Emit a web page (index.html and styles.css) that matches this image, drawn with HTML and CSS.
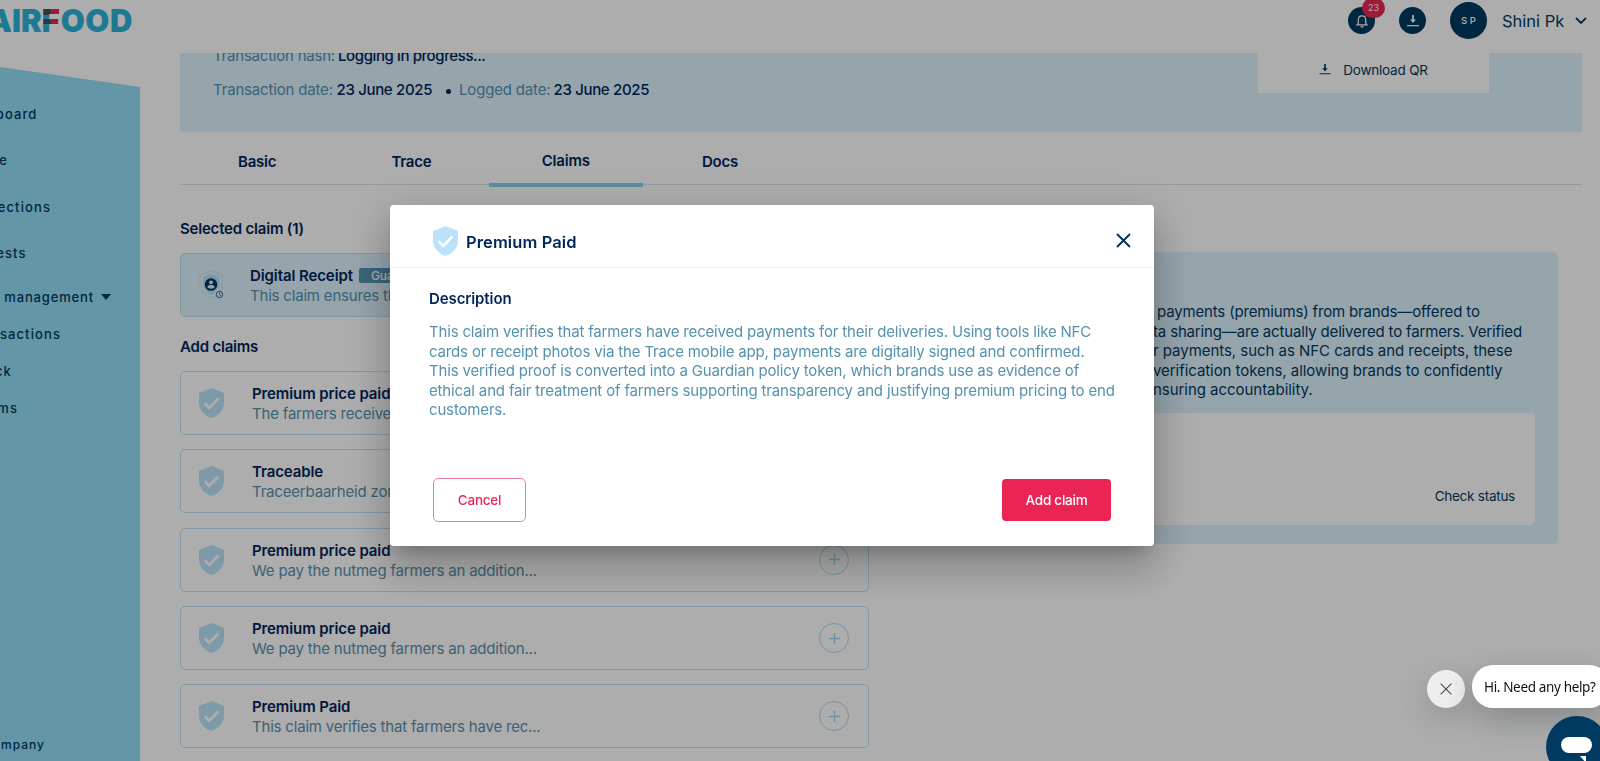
FILE: index.html
```html
<!DOCTYPE html>
<html lang="en">
<head>
<meta charset="utf-8">
<title>Fairfood Trace</title>
<link rel="stylesheet" href="styles.css">
</head>
<body>
<svg class="defs" width="0" height="0">
  <symbol id="shield" viewBox="0 0 25 30"><path fill="currentColor" d="M12.500 0 25 5v9.500c0 7-4.800 13-12.500 15.500C4.800 27.500 0 21.500 0 14.500V5z"/><path d="m5.700 15.300 4.500 4.500 9.300-9.300" fill="none" stroke="#fff" stroke-width="2.700"/></symbol>
  <symbol id="download" viewBox="0 0 12 12"><path d="M6 0v6" stroke="currentColor" stroke-width="1.800"/><path d="M3 4.500h6L6 8z" fill="currentColor"/><path d="M0 10.700h12" stroke="currentColor" stroke-width="1.200"/></symbol>
  <symbol id="plus" viewBox="0 0 11 11"><path d="M5.500 0v11M0 5.500h11" stroke="currentColor" stroke-width="1.400"/></symbol>
</svg>

<div class="app">
  <header class="topbar">
    <div class="logo"><span class="logo-air">AIR</span><span class="logo-f">F</span><span class="logo-ood">OOD</span></div>
    <div class="tools">
      <div class="tool"><svg width="12" height="14" viewBox="0 0 12 14" fill="none" stroke="#fff" stroke-width="1.200"><path d="M1 10.800h10L9.700 9V5.500C9.700 3.200 8.200 1.800 6 1.800S2.300 3.200 2.300 5.500V9z"/><path d="M4.500 12.800h3"/></svg><span class="count">23</span></div>
      <div class="tool"><svg class="dl" width="12" height="12"><use href="#download"/></svg></div>
      <div class="avatar">S P</div>
      <div class="user">Shini Pk</div>
      <svg class="chev" width="12" height="8" viewBox="0 0 12 8"><path d="m1 1 5 5 5-5" fill="none" stroke="#003a60" stroke-width="1.800"/></svg>
    </div>
  </header>

  <div class="body">
    <nav class="side">
      <div class="side-item w-board">board</div>
      <div class="side-item w-e">e</div>
      <div class="side-item w-ections">ections</div>
      <div class="side-item w-ests">ests</div>
      <div class="side-item short w-mgmt">management<i class="caret"></i></div>
      <div class="side-item short w-sactions">sactions</div>
      <div class="side-item short w-ck">ck</div>
      <div class="side-item short w-ms">ms</div>
      <div class="company">ompany</div>
    </nav>

    <main class="main">
      <section class="info">
        <div class="info-lines">
          <div class="info-row"><span class="lbl hash">Transaction hash:</span> <b class="val progress">Logging in progress...</b></div>
          <div class="info-row"><span class="lbl">Transaction date:</span> <b class="val">23 June 2025</b><i class="dot"></i><span class="lbl logged">Logged date:</span> <b class="val">23 June 2025</b></div>
        </div>
        <div class="qr"><svg width="12" height="11"><use href="#download"/></svg><span>Download QR</span></div>
      </section>

      <div class="tabs">
        <div class="tab">Basic</div><div class="tab">Trace</div><div class="tab active">Claims</div><div class="tab">Docs</div>
      </div>

      <div class="cols">
        <section class="claims">
          <h2 class="h selected-h">Selected claim (1)</h2>
          <article class="card chosen">
            <svg class="ico-digital" width="26" height="30" viewBox="0 0 26 30"><path d="M12 1 23 5v9c0 6-4 11-11 14C5 25 1 20 1 14V5z" fill="none" stroke="#c3e5f7"/><path d="M12 4 20 7v7c0 5-3 8-8 11-5-3-8-6-8-11V7z" fill="#bae1f6"/><circle cx="12" cy="14.500" r="6.300" fill="#003a60"/><circle cx="12" cy="12.300" r="1.900" fill="#def2fe"/><path d="M8.300 17c.8-2.600 6.600-2.600 7.400 0-1.500 2.300-5.900 2.300-7.400 0z" fill="#def2fe"/><circle cx="20.500" cy="24.500" r="3.200" fill="#def2fe" stroke="#33618a"/><path d="M20.500 22.500v2.200l1.500 1" fill="none" stroke="#33618a" stroke-width=".9"/></svg>
            <div class="txt"><div class="title">Digital Receipt <span class="tag">Guardian</span></div><div class="desc">This claim ensures th</div></div>
          </article>
          <h2 class="h">Add claims</h2>
          <div class="list">
            <article class="card"><svg class="shield"><use href="#shield"/></svg><div class="txt"><div class="title">Premium price paid</div><div class="desc">The farmers receive</div></div><div class="add"><svg width="11" height="11"><use href="#plus"/></svg></div></article>
            <article class="card"><svg class="shield"><use href="#shield"/></svg><div class="txt"><div class="title">Traceable</div><div class="desc">Traceerbaarheid zor</div></div><div class="add"><svg width="11" height="11"><use href="#plus"/></svg></div></article>
            <article class="card"><svg class="shield"><use href="#shield"/></svg><div class="txt"><div class="title">Premium price paid</div><div class="desc">We pay the nutmeg farmers an addition...</div></div><div class="add"><svg width="11" height="11"><use href="#plus"/></svg></div></article>
            <article class="card"><svg class="shield"><use href="#shield"/></svg><div class="txt"><div class="title">Premium price paid</div><div class="desc">We pay the nutmeg farmers an addition...</div></div><div class="add"><svg width="11" height="11"><use href="#plus"/></svg></div></article>
            <article class="card"><svg class="shield"><use href="#shield"/></svg><div class="txt"><div class="title">Premium Paid</div><div class="desc">This claim verifies that farmers have rec...</div></div><div class="add"><svg width="11" height="11"><use href="#plus"/></svg></div></article>
          </div>
        </section>
        <section class="detail">
          <p class="detail-text"><span class="l1">payments (premiums) from brands—offered to</span><span class="l2">ta sharing—are actually delivered to farmers. Verified</span><span class="l3">r payments, such as NFC cards and receipts, these</span><span class="l4">verification tokens, allowing brands to confidently</span><span class="l5">nsuring accountability.</span></p>
          <div class="status"><span>Check status</span></div>
        </section>
      </div>
    </main>
  </div>
</div>

<div class="backdrop">
  <div class="modal">
    <div class="modal-head">
      <svg class="shield"><use href="#shield"/></svg><h1 class="modal-title">Premium Paid</h1>
      <svg class="close" width="15" height="15" viewBox="0 0 15 15"><path d="m1 1 13 13M14 1 1 14" stroke="#003060" stroke-width="1.800"/></svg>
    </div>
    <div class="modal-body">
      <h3 class="sub">Description</h3>
      <p class="para"><span class="p1">This claim verifies that farmers have received payments for their deliveries. Using tools like NFC</span><span class="p2">cards or receipt photos via the Trace mobile app, payments are digitally signed and confirmed.</span><span class="p3">This verified proof is converted into a Guardian policy token, which brands use as evidence of</span><span class="p4">ethical and fair treatment of farmers supporting transparency and justifying premium pricing to end</span><span class="p5">customers.</span></p>
    </div>
    <div class="actions"><button class="btn cancel">Cancel</button><button class="btn primary">Add claim</button></div>
  </div>
</div>

<div class="chat-hint"><div class="chat-x"><svg width="12" height="12" viewBox="0 0 12 12"><path d="m.6.6 10.800 10.800M11.400.6.6 11.400" stroke="#4a5257" stroke-width="1.200"/></svg></div><div class="chat-msg">Hi. Need any help?</div></div>
<div class="launcher"><svg width="32" height="30" viewBox="0 0 32 30"><rect width="31" height="16" rx="8" fill="#fff"/><path d="M19 19h6v7z" fill="#fff"/></svg></div>
</body>
</html>
```
FILE: styles.css
```css
* { box-sizing: border-box; }
body { margin: 0; width: 1600px; height: 761px; overflow: hidden; background: #fff; color: #00255a; font-family: Inter, "Liberation Sans", sans-serif; font-size: 15px; }
h1, h2, h3, p { margin: 0; }
.defs { position: absolute; }
.app { height: 761px; overflow: hidden; }

.topbar { height: 53px; display: flex; justify-content: space-between; }
.logo { width: 132px; height: 42px; display: flex; justify-content: flex-end; font-weight: 900; font-size: 31px; line-height: 42px; color: #2cb4dc; }
.logo-air { letter-spacing: 0; }
.logo-f { width: 19px; flex: none; margin-left: 0; color: transparent; -webkit-background-clip: text; background-clip: text; background-image: linear-gradient(90deg, transparent 9px, #ea2553 9px), linear-gradient(#4d4d4d 15px, #2cb4dc 15px 19px, #4d4d4d 19px 24px, #2cb4dc 24px); }
.logo-ood { letter-spacing: .6px; margin-right: -1px; }
.tools { display: flex; height: 41px; align-items: center; padding-right: 13px; }
.tool { width: 27px; height: 27px; border-radius: 50%; background: #003a60; display: flex; align-items: center; justify-content: center; position: relative; margin-right: 24px; }
.dl { color: #fff; }
.count { position: absolute; left: 14px; top: -9px; width: 23px; height: 20px; border-radius: 10px; background: #ea2553; color: #fff; font-size: 9px; line-height: 20px; text-align: center; }
.avatar { width: 37px; height: 37px; border-radius: 50%; background: #003a60; color: #fff; font-size: 9.500px; font-weight: 500; line-height: 37px; text-align: center; }
.user { margin: 0 12px 0 15px; padding-top: 1px; font-size: 16.500px; width: 61px; white-space: nowrap; color: #003a60; }

.body { display: flex; height: 708px; }
.side { width: 140px; height: 694px; flex: none; margin-top: 14px; padding-top: 24px; background: #93ddf6; clip-path: polygon(0 0, 100% 20px, 100% 100%, 0 100%); display: flex; flex-direction: column; color: #003a60; }
.side-item { height: 46.300px; display: flex; align-items: center; justify-content: flex-end; font-size: 13px; letter-spacing: 1.100px; font-weight: 500; white-space: nowrap; }
.side-item.short { height: 36.900px; }
.side-item.w-mgmt { margin-top: 2.500px; letter-spacing: .85px; }
.w-board { width: 37.500px; } .w-e { width: 8px; } .w-ections { width: 51px; } .w-ests { width: 26.500px; }
.w-mgmt { width: 111px; } .w-sactions { width: 61px; } .w-ck { width: 12px; } .w-ms { width: 18px; }
.caret { border: 5px solid transparent; border-top: 6px solid #003a60; border-bottom: 0; margin-left: 7px; }
.company { margin-top: auto; padding-bottom: 7px; width: 45px; display: flex; justify-content: flex-end; font-size: 12px; font-weight: 500; letter-spacing: 1px; line-height: 18px; }

.main { width: 1402px; margin-left: 40px; }
.info { height: 79px; background: #def2fe; border-radius: 0 0 3px 3px; display: flex; justify-content: space-between; padding: 0 93px 0 33px; overflow: hidden; }
.info-lines { margin-top: -14px; }
.info-row { height: 34px; line-height: 34px; display: flex; align-items: center; gap: 4px; white-space: nowrap; }
.lbl { color: #5691ae; width: 119.500px; letter-spacing: -.17px; }
.lbl.hash { width: 121px; letter-spacing: -.22px; }
.val { font-weight: 500; width: 95px; letter-spacing: -.33px; }
.val.progress { width: 150px; letter-spacing: -.4px; }
.dot { width: 5px; height: 5px; border-radius: 50%; background: #00255a; margin: 3px 4px 0 10.500px; }
.lbl.logged { width: 90.500px; }
.qr { width: 231px; height: 40px; background: #fff; display: flex; justify-content: center; align-items: center; gap: 12px; font-size: 13.500px; letter-spacing: -.2px; padding-bottom: 7px; color: #003a60; }

.tabs { display: flex; height: 53px; border-bottom: 1px solid #dbe3e9; }
.tab { width: 154.300px; text-align: center; line-height: 60px; font-weight: 600; height: 55px; letter-spacing: -.2px; }
.tab.active { line-height: 57px; border-bottom: 4px solid #84d3f0; }
.cols { display: flex; align-items: flex-start; }
.claims { width: 689px; }
.h { font-size: 15px; font-weight: 600; line-height: 20px; margin-top: 20px; letter-spacing: -.2px; }
.selected-h { margin-top: 34px; }
.card { height: 64px; border: 1px solid #bae3f9; border-radius: 5px; display: flex; align-items: center; padding: 0 19px 0 18px; }
.card.chosen { margin-top: 14px; background: #def2fe; }
.list { margin-top: 14.200px; display: flex; flex-direction: column; gap: 14.300px; }
.shield { width: 25px; height: 30px; color: #bae3f9; flex: none; }
.txt { margin-left: 28px; flex: 1; white-space: nowrap; padding-top: 1px; }
.chosen .txt { margin-left: 25px; padding-bottom: 1px; }
.title { font-weight: 600; line-height: 20px; display: flex; align-items: center; letter-spacing: -.1px; }
.desc { line-height: 19px; color: #5691ae; letter-spacing: -.19px; }
.tag { margin-left: 6px; background: #5596b5; color: #fff; font-weight: 500; font-size: 12px; line-height: 15px; height: 15px; border-radius: 2px; padding: 0 12px; }
.add { width: 30px; height: 30px; border: 1px solid #a9dcf5; border-radius: 50%; display: flex; align-items: center; justify-content: center; color: #a3d4ee; }
.detail { margin: 67px 0 0 24px; width: 665px; height: 292px; background: #def2fe; border-radius: 5px; padding: 50px 23px 0 24px; }
.detail-text { margin-left: 236px; line-height: 19.500px; white-space: nowrap; color: #003a60; }
.detail-text span, .para span { display: block; width: max-content; }
.l1 { padding-left: 4px; letter-spacing: -.16px; }
.l2 { letter-spacing: -.16px; }
.l3, .l5 { letter-spacing: -.04px; }
.l4 { letter-spacing: -.06px; }
.status { margin-top: 13px; height: 112px; background: #fff; border-radius: 5px; padding: 74px 20px 0; text-align: right; font-size: 13.500px; line-height: 18px; letter-spacing: -.25px; color: #003a60; }

.backdrop { position: fixed; inset: 0; background: rgba(0, 0, 0, .32); padding: 205px 446px 0 390px; }
.modal { height: 341px; background: #fff; border-radius: 4px; box-shadow: 0 11px 15px -7px rgba(0,0,0,.2), 0 24px 38px 3px rgba(0,0,0,.14), 0 9px 46px 8px rgba(0,0,0,.12); display: flex; flex-direction: column; }
.modal-head { height: 63px; border-bottom: 1px solid #eef0f1; padding: 9px 23px 0 43px; display: flex; align-items: center; }
.modal-title { font-size: 16.500px; font-weight: 600; margin-left: 8px; flex: 1; line-height: 24px; padding-top: 2px; letter-spacing: .1px; }
.modal-body { padding: 20px 39px 0; }
.sub { font-size: 15px; font-weight: 600; line-height: 21px; letter-spacing: -.1px; }
.para { margin-top: 13px; line-height: 19.500px; color: #5691ae; white-space: nowrap; letter-spacing: -.16px; }
.p1 { letter-spacing: -.18px; }
.actions { margin-top: auto; padding: 0 43px 24px; display: flex; justify-content: space-between; align-items: center; }
.btn { font: 500 13.500px Inter, sans-serif; letter-spacing: -.25px; border-radius: 5px; padding-top: 1px; }
.cancel { width: 93px; height: 44px; background: #fff; border: 1px solid #f07f98; color: #ea2553; }
.primary { width: 109px; height: 42px; border: 0; background: #ea2553; color: #fff; border-radius: 4px; }

.chat-hint { position: fixed; right: -10px; bottom: 53px; display: flex; align-items: flex-end; gap: 7px; }
.chat-x { width: 38px; height: 38px; border-radius: 50%; background: #eee; display: flex; align-items: center; justify-content: center; box-shadow: 0 10px 30px rgba(35, 47, 53, .2); }
.chat-msg { width: 138px; height: 43px; border-radius: 21px; background: #fff; color: #111; font: 13.500px/44px "Noto Sans", sans-serif; letter-spacing: -.35px; padding-left: 12px; white-space: nowrap; box-shadow: 0 12px 30px rgba(35, 47, 53, .28); }
.launcher { position: fixed; left: 1546px; top: 716px; width: 62px; height: 62px; border-radius: 50%; background: #003a60; padding: 21px 0 0 15px; }
```
